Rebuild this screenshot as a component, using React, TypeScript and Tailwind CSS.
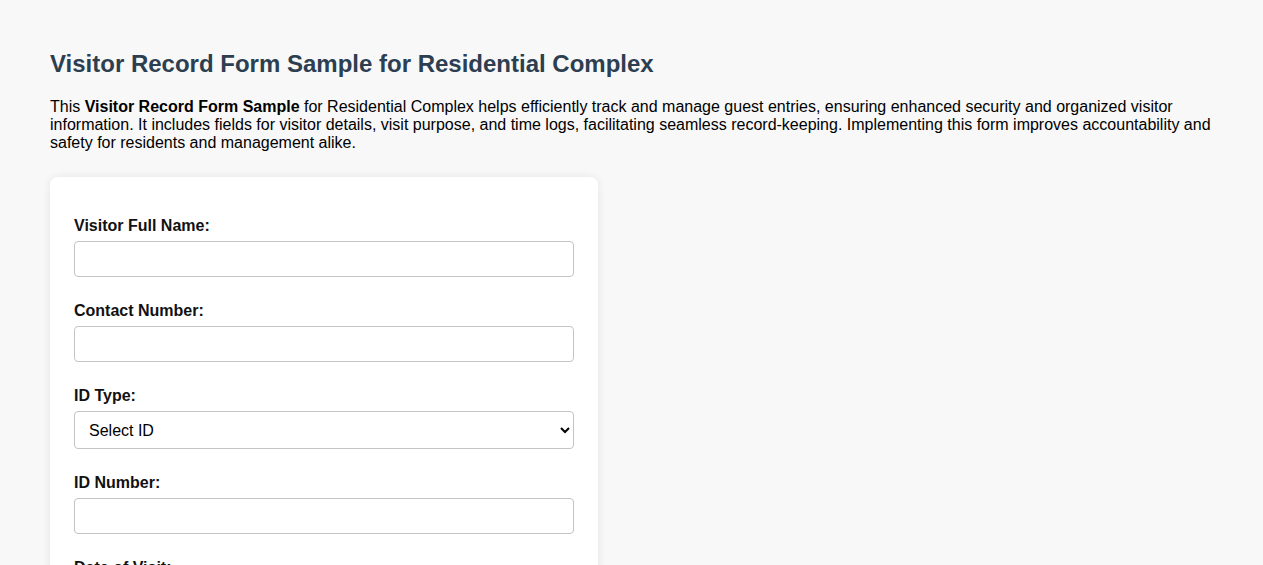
const FIELDS_BEFORE = [
  { id: 'fullName', label: 'Visitor Full Name:' },
  { id: 'contact', label: 'Contact Number:' },
];

function TextField({ id, label }: { id: string; label: string }) {
  return (
    <div className="mb-[24px]">
      <label htmlFor={id} className="mb-[6px] block pt-px text-[16px] font-bold leading-[18px] text-[#111]">
        {label}
      </label>
      <input
        id={id}
        type="text"
        className="block h-[36px] w-full rounded-[4px] border border-[#c4c4c4] bg-white px-[8px] text-[16px]"
      />
    </div>
  );
}

export default function App() {
  return (
    <div className="min-h-screen bg-[#f8f8f8] px-[50px] pt-[50px] font-['Liberation_Sans',Arial,sans-serif] text-black">
      <h1 className="text-[24px] font-bold leading-[28px] text-[#2c3e50]">
        Visitor Record Form Sample for Residential Complex
      </h1>
      <p className="mt-[20px] text-[16px] leading-[18px]">
        This <strong>Visitor Record Form Sample</strong> for Residential Complex helps efficiently track and
        manage guest entries, ensuring enhanced security and organized visitor information. It includes fields
        for visitor details, visit purpose, and time logs, facilitating seamless record-keeping. Implementing
        this form improves accountability and safety for residents and management alike.
      </p>
      <form className="mt-[25px] w-[548px] rounded-[8px] bg-white px-[24px] pt-[39px] pb-[24px] shadow-[0_0_10px_rgba(0,0,0,0.08)]">
        {FIELDS_BEFORE.map((f) => (
          <TextField key={f.id} id={f.id} label={f.label} />
        ))}
        <div className="mb-[24px]">
          <label htmlFor="idType" className="mb-[6px] block pt-px text-[16px] font-bold leading-[18px] text-[#111]">
            ID Type:
          </label>
          <select
            id="idType"
            defaultValue=""
            className="block h-[38px] w-full appearance-auto rounded-[4px] border border-[#c4c4c4] bg-white px-[10px] text-[16px] leading-[18px]"
          >
            <option value="">Select ID</option>
            <option value="passport">Passport</option>
            <option value="license">Driver's License</option>
            <option value="national">National ID</option>
          </select>
        </div>
        <TextField id="idNumber" label="ID Number:" />
        <TextField id="visitDate" label="Date of Visit:" />
        <TextField id="purpose" label="Purpose of Visit:" />
      </form>
    </div>
  );
}
